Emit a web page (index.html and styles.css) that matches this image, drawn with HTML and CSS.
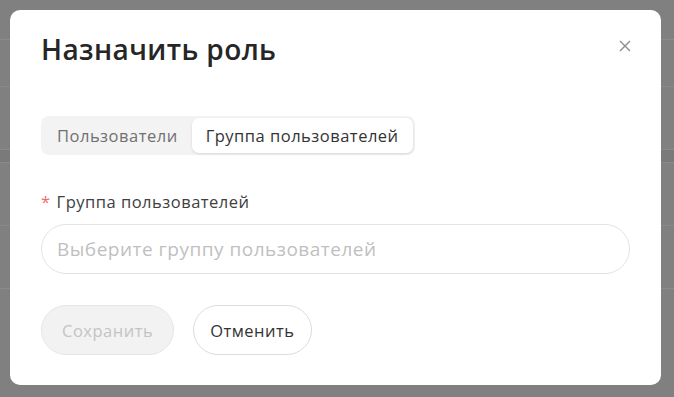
FILE: index.html
```html
<!DOCTYPE html>
<html lang="ru">
<head>
    <meta charset="UTF-8">
    <meta name="viewport" content="width=device-width, initial-scale=1.0">
    <title>Назначить роль</title>
    <link rel="stylesheet" href="styles.css">
</head>
<body>
    <div class="page">
        <div class="page-row head"></div>
        <div class="page-row"></div>
        <div class="page-row tall"></div>
        <div class="page-row band"></div>
        <div class="page-row tall"></div>
        <div class="page-row tall"></div>
    </div>

    <div class="overlay">
        <div class="modal">
            <div class="modal-header">
                <h2 class="modal-title">Назначить роль</h2>
                <button class="close-btn" aria-label="Закрыть">
                    <svg width="12" height="12" viewBox="0 0 12 12">
                        <path d="M1 1L11 11M11 1L1 11" stroke="#8c8c8c" stroke-width="1.4" fill="none"/>
                    </svg>
                </button>
            </div>

            <div class="segmented">
                <button class="segment">Пользователи</button>
                <button class="segment active">Группа пользователей</button>
            </div>

            <div class="field">
                <label class="field-label"><span class="required">*</span>Группа пользователей</label>
                <input class="field-input" type="text" placeholder="Выберите группу пользователей">
            </div>

            <div class="actions">
                <button class="btn btn-disabled" disabled>Сохранить</button>
                <button class="btn btn-cancel">Отменить</button>
            </div>
        </div>
    </div>
</body>
</html>
```

FILE: styles.css
```css
body {
    margin: 0;
    font-family: "Open Sans", "Noto Sans", sans-serif;
    background: #808080;
    height: 100vh;
    overflow: hidden;
}

.page-row {
    height: 46px;
    border-bottom: 1px solid #8a8a8a;
}

.page-row.head {
    height: 39px;
}

.page-row.tall {
    height: 62px;
}

.page-row.band {
    height: 12px;
    background: #7a7a7a;
}

.overlay {
    position: fixed;
    top: 10px;
    left: 10px;
}

.modal {
    width: 651px;
    height: 375px;
    box-sizing: border-box;
    background: #ffffff;
    border-radius: 10px;
    padding: 20px 31px 0 31px;
}

.modal-header {
    display: flex;
    justify-content: space-between;
    align-items: flex-start;
}

.modal-title {
    margin: 0;
    font-size: 28px;
    line-height: 38px;
    font-weight: 600;
    letter-spacing: 0.4px;
    color: #262626;
}

.close-btn {
    background: none;
    border: none;
    padding: 0;
    margin: 10px -1px 0 0;
    cursor: pointer;
    line-height: 0;
}

.segmented {
    display: inline-flex;
    margin-top: 48px;
    padding: 2px;
    background: #f3f3f3;
    border-radius: 8px;
}

.segment {
    font-family: inherit;
    font-size: 16.5px;
    letter-spacing: 0.5px;
    color: #707070;
    background: none;
    border: none;
    padding: 0 14px;
    height: 35px;
    border-radius: 7px;
    cursor: pointer;
}

.segment.active {
    background: #ffffff;
    color: #333333;
    box-shadow: 0 1px 3px rgba(0, 0, 0, 0.12);
}

.field {
    display: flex;
    flex-direction: column;
    margin-top: 36px;
}

.field-label {
    font-size: 16.5px;
    letter-spacing: 0.5px;
    line-height: 22px;
    color: #404040;
}

.required {
    color: #f26b6b;
    margin-right: 6px;
}

.field-input {
    margin-top: 11px;
    height: 50px;
    box-sizing: border-box;
    border: 1px solid #e3e3e3;
    border-radius: 25px;
    padding: 0 15px;
    font-family: inherit;
    font-size: 19px;
    letter-spacing: 0.5px;
    outline: none;
}

.field-input::placeholder {
    color: #bfbfbf;
}

.actions {
    display: flex;
    gap: 19px;
    margin-top: 31px;
}

.btn {
    height: 50px;
    padding: 0 20px;
    border-radius: 25px;
    border: 1px solid #dcdcdc;
    background: #ffffff;
    font-family: inherit;
    font-size: 16.5px;
    letter-spacing: 0.5px;
    color: #333333;
    cursor: pointer;
}

.btn-disabled {
    background: #f2f2f2;
    border-color: #e6e6e6;
    color: #c4c4c4;
    cursor: default;
}

.btn-cancel {
    padding: 0 16px;
}
```
